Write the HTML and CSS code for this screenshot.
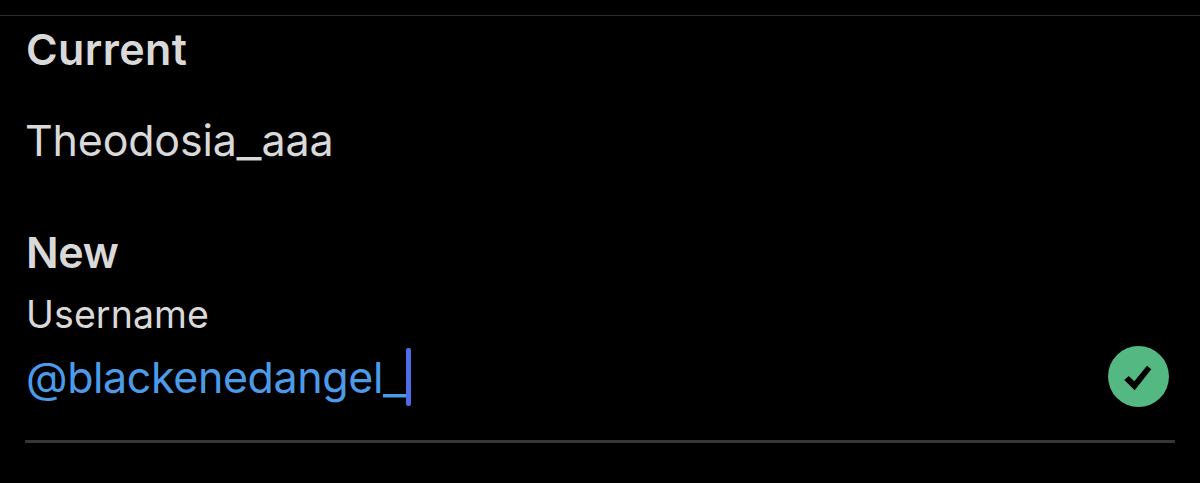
FILE: index.html
```html
<!DOCTYPE html>
<html lang="en">
<head>
    <meta charset="UTF-8">
    <title>Change username</title>
    <link rel="stylesheet" href="styles.css">
</head>
<body>
    <div class="top-bar"></div>
    <div class="container">
        <h2>Current</h2>
        <p class="current-name">Theodosia<span class="underscore">_</span>aaa</p>

        <h2 class="new-title">New</h2>
        <div class="label">Username</div>
        <div class="field">
            <span class="value">@blackenedangel<span class="underscore">_</span></span>
            <span class="cursor"></span>
            <svg class="check" width="61" height="61" viewBox="0 0 61 61">
                <circle cx="30.5" cy="30.5" r="30.5" fill="#53b882"/>
                <path d="M16.3 34 L20.7 30 L26.3 35.3 L39 19.8 L43.3 23.3 L26.7 44.3 Z" fill="#000000"/>
            </svg>
        </div>
    </div>
</body>
</html>
```

FILE: styles.css
```css
body {
    margin: 0;
    background-color: #000000;
    color: #d9d9d9;
    font-family: Inter, "Liberation Sans", sans-serif;
    overflow: hidden;
}
.top-bar {
    height: 15px;
    border-bottom: 1px solid #2f2f2f;
}
.container {
    margin: 0 25px;
    padding-top: 8px;
}
h2 {
    margin: 0;
    padding-left: 1px;
    font-size: 43px;
    font-weight: 600;
    line-height: 50px;
    letter-spacing: 0.4px;
}
.new-title {
    letter-spacing: -0.3px;
}
.current-name {
    margin: 41px 0 62px;
    font-size: 43px;
    line-height: 50px;
    letter-spacing: -0.2px;
}
.underscore {
    font-size: 56px;
    font-weight: 300;
    line-height: 0;
    vertical-align: -1px;
}
.label {
    margin-top: 18px;
    padding-left: 1px;
    font-size: 37.5px;
    line-height: 40px;
    letter-spacing: 0.1px;
}
.field {
    display: flex;
    align-items: center;
    height: 61px;
    margin-top: 11px;
    padding: 0 6px 33px 1px;
    border-bottom: 3px solid #363636;
}
.value {
    color: #4c9be8;
    font-size: 43px;
    line-height: 50px;
    letter-spacing: -0.4px;
}
/* text caret */
.cursor {
    width: 5px;
    height: 58px;
    margin-left: -2px;
    border-radius: 2px;
    background-color: #4e6bea;
}
.check {
    margin-left: auto;
}
```
